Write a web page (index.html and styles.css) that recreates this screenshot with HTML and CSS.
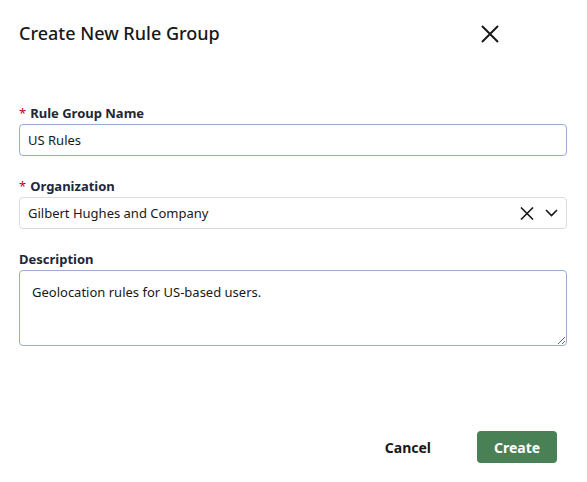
FILE: index.html
```html
<!DOCTYPE html>
<html>
<head>
<meta charset="utf-8">
<link rel="stylesheet" href="styles.css">
</head>
<body>
<div class="modal">
  <div class="header">
    <h1 class="title">Create New Rule Group</h1>
    <button class="close" aria-label="Close">
      <svg width="18" height="18" viewBox="0 0 18 18"><path d="M1 1 L17 17 M17 1 L1 17" stroke="#181818" stroke-width="2" fill="none"/></svg>
    </button>
  </div>
  <form class="form">
    <div class="field">
      <label class="label"><span class="req">*</span>Rule Group Name</label>
      <div class="input focus">US Rules</div>
    </div>
    <div class="field">
      <label class="label"><span class="req">*</span>Organization</label>
      <div class="input select">
        <span class="value">Gilbert Hughes and Company</span>
        <span class="icons">
          <svg width="14" height="13" viewBox="0 0 14 13"><path d="M1 0.5 L13 12.5 M13 0.5 L1 12.5" stroke="#181818" stroke-width="1.6" fill="none"/></svg>
          <svg width="13" height="8" viewBox="0 0 13 8"><path d="M1 1 L6.5 6.5 L12 1" stroke="#181818" stroke-width="1.6" fill="none"/></svg>
        </span>
      </div>
    </div>
    <div class="field">
      <label class="label">Description</label>
      <textarea class="textarea">Geolocation rules for US-based users.</textarea>
    </div>
  </form>
  <div class="footer">
    <button class="btn cancel" type="button">Cancel</button>
    <button class="btn create" type="button">Create</button>
  </div>
</div>
</body>
</html>
```
FILE: styles.css
```css
html, body {
  margin: 0;
  padding: 0;
  background: #ffffff;
}
body {
  font-family: "Noto Sans", "Open Sans", sans-serif;
  color: #181818;
  width: 587px;
  height: 482px;
  overflow: hidden;
}
.modal {
  display: flex;
  flex-direction: column;
  padding: 0 20px 0 19px;
}
.header {
  display: flex;
  align-items: center;
  justify-content: space-between;
  padding-top: 21px;
  height: 24px;
}
.title {
  margin: 0;
  font-size: 18px;
  line-height: 24px;
  font-weight: 500;
  color: #181818;
}
.close {
  border: 0;
  background: none;
  padding: 0;
  margin-right: 68px;
  width: 18px;
  height: 18px;
  display: flex;
  margin-top: 2px;
}
.form {
  display: flex;
  flex-direction: column;
  gap: 21px;
  margin-top: 59px;
}
.field {
  display: flex;
  flex-direction: column;
  gap: 2px;
}
.label {
  font-size: 13px;
  line-height: 18px;
  font-weight: 700;
  color: #212738;
}
.req {
  color: #ba0517;
  margin-right: 4px;
  font-weight: 400;
  font-size: 13px;
}
.input {
  box-sizing: border-box;
  height: 32px;
  border: 1px solid #dddbda;
  border-radius: 4px;
  padding: 0 8px;
  font-size: 13px;
  line-height: 30px;
  color: #181818;
}
.input.focus {
  border-color: #97b0cf;
}
.select {
  display: flex;
  justify-content: space-between;
  align-items: center;
}
.icons {
  display: flex;
  align-items: center;
  gap: 11px;
  margin-right: 0;
}
.textarea {
  box-sizing: border-box;
  height: 76px;
  border: 1px solid #97b0cf;
  border-radius: 4px;
  padding: 12px 12px;
  font-family: inherit;
  font-size: 13px;
  line-height: 18px;
  color: #181818;
  resize: vertical;
  margin: 0;
}
.footer {
  display: flex;
  justify-content: flex-end;
  align-items: center;
  gap: 23px;
  margin-top: 85px;
  padding-right: 10px;
}
.btn {
  font-family: inherit;
  font-size: 14px;
  font-weight: 700;
  height: 32px;
  border-radius: 4px;
  cursor: pointer;
}
.cancel {
  background: none;
  border: 0;
  color: #181818;
  padding: 0 23px;
}
.create {
  background: #4a8056;
  border: 0;
  color: #ffffff;
  width: 80px;
}
```
